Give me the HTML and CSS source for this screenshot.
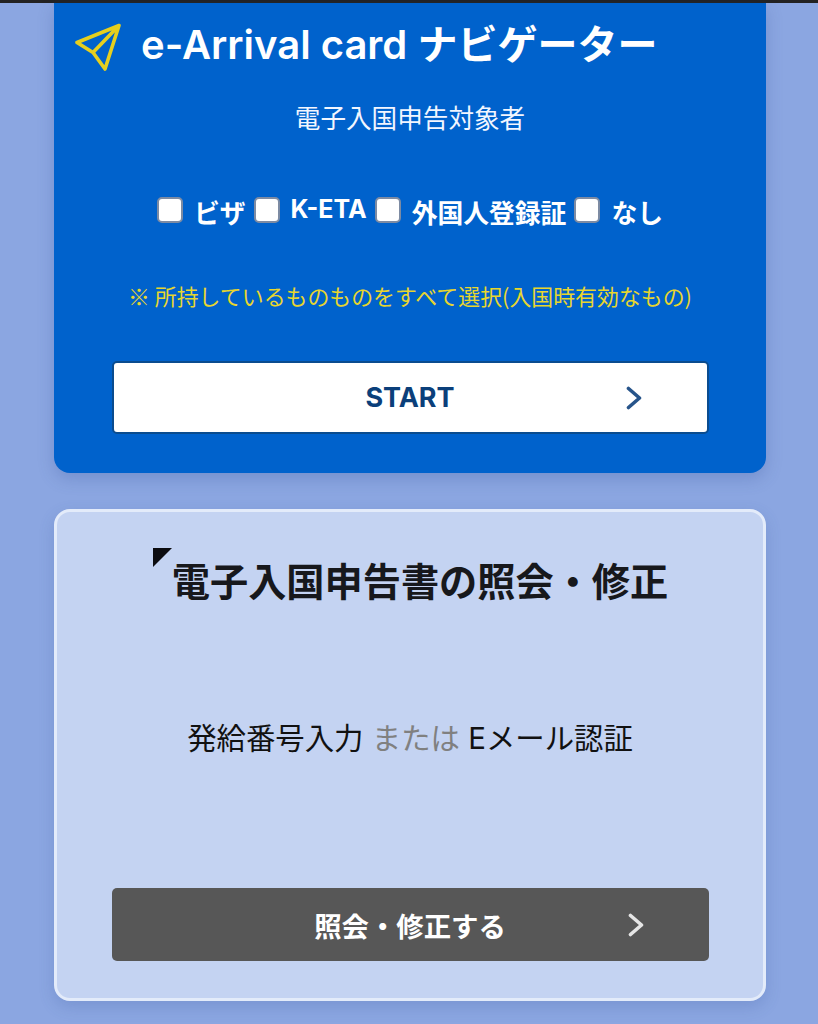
FILE: index.html
```html
<!DOCTYPE html>
<html lang="ja">
<head>
<meta charset="utf-8">
<title>e-Arrival card</title>
<link rel="stylesheet" href="styles.css">
</head>
<body>
<div class="statusline"></div>
<main class="page">
  <section class="card card-blue">
    <h2 class="nav-title">
      <svg class="plane" viewBox="0 0 48 48" width="48" height="48" aria-hidden="true">
        <path d="M45 2.5 3 19.5 19 29.5 31 46Z M45 2.5 19 29.5" fill="none" stroke="#e6cf1e" stroke-width="3.6" stroke-linejoin="round"/>
      </svg>
      <span>e-Arrival card ナビゲーター</span>
    </h2>
    <p class="target">電子入国申告対象者</p>
    <div class="checks">
      <label class="check"><span class="box"></span><span class="lbl">ビザ</span></label>
      <label class="check"><span class="box"></span><span class="lbl lbl-up">K-ETA</span></label>
      <label class="check"><span class="box"></span><span class="lbl">外国人登録証</span></label>
      <label class="check"><span class="box"></span><span class="lbl">なし</span></label>
    </div>
    <p class="note">※ 所持しているものものをすべて選択(入国時有効なもの)</p>
    <a class="btn btn-white"><span>START</span>
      <svg class="chev" viewBox="0 0 16 24" width="16" height="24" aria-hidden="true"><path d="M2.5 2.5 13.5 12 2.5 21.5" fill="none" stroke="#27548a" stroke-width="3.6" stroke-linecap="round" stroke-linejoin="round"/></svg>
    </a>
  </section>
  <section class="card card-light">
    <h2 class="query-title"><span class="corner"></span>電子入国申告書の照会・修正</h2>
    <p class="query-text">発給番号入力 <span class="or">または</span> Eメール認証</p>
    <a class="btn btn-dark"><span>照会・修正する</span>
      <svg class="chev" viewBox="0 0 16 24" width="16" height="24" aria-hidden="true"><path d="M2.5 2.5 13.5 12 2.5 21.5" fill="none" stroke="#e6e6e6" stroke-width="3.6" stroke-linecap="round" stroke-linejoin="round"/></svg>
    </a>
  </section>
</main>
</body>
</html>
```
FILE: styles.css
```css
* { box-sizing: border-box; }
html, body { margin: 0; padding: 0; }
body {
  width: 818px;
  height: 1024px;
  overflow: hidden;
  background: #8ba6e1;
  font-family: Inter, "Noto Sans CJK JP", sans-serif;
}
.statusline { height: 3px; background: #222; }
.page {
  padding: 0 52px 0 54px;
  display: flex;
  flex-direction: column;
  gap: 36px;
}
.card { width: 712px; position: relative; }
.card-blue {
  height: 470px;
  background: #0062cc;
  border-radius: 0 0 16px 16px;
  box-shadow: 0 6px 16px rgba(50, 80, 150, .25);
  padding-top: 14px;
  color: #fff;
  display: flex;
  flex-direction: column;
  align-items: center;
}
.nav-title {
  margin: 0;
  align-self: flex-start;
  display: flex;
  align-items: center;
  gap: 19px;
  padding-left: 20px;
  height: 56px;
  font-size: 40px;
  font-weight: 600;
  line-height: 56px;
  white-space: nowrap;
}
.plane { flex: none; margin-top: 4px; }
.target {
  margin: 28px 0 0;
  font-size: 25.6px;
  line-height: 36px;
  color: #f2f6ff;
}
.checks {
  margin-top: 57px;
  height: 40px;
  display: flex;
  align-items: center;
  gap: 8px;
  font-size: 25.8px;
  font-weight: 700;
}
.check { display: flex; align-items: center; gap: 11px; }
.box {
  width: 26px;
  height: 26px;
  background: #fff;
  border: 2px solid #7d8ba3;
  border-radius: 5px;
  margin-top: -8px;
}
.lbl { line-height: 40px; }
.lbl-up { font-size: 25px; margin-top: -10px; }
.note {
  margin: 46px 0 0;
  font-family: "Noto Sans CJK JP", sans-serif;
  font-size: 21.9px;
  line-height: 32px;
  color: #e8d62e;
}
.btn {
  width: 597px;
  height: 73px;
  border-radius: 5px;
  display: flex;
  align-items: center;
  justify-content: center;
  position: relative;
  font-size: 27px;
  font-weight: 700;
}
.btn .chev { position: absolute; right: 65px; }
.btn-white {
  margin-top: 49px;
  background: #fff;
  border: 2px solid #0a4c8f;
  color: #0b3f7a;
}
.btn-white .chev { top: 23px; }
.card-light {
  height: 492px;
  background: #c4d3f2;
  border: 3px solid #e3ebfa;
  border-radius: 16px;
  box-shadow: 0 6px 16px rgba(50, 80, 150, .2);
  display: flex;
  flex-direction: column;
  align-items: center;
}
.query-title {
  margin: 43px 0 0 20px;
  position: relative;
  font-size: 38.2px;
  font-weight: 700;
  line-height: 54px;
  color: #17181c;
  white-space: nowrap;
}
.corner {
  position: absolute;
  left: -19px;
  top: -7px;
  width: 0;
  height: 0;
  border-top: 19px solid #0c0c10;
  border-right: 19px solid transparent;
}
.query-text {
  margin: 109px 0 0;
  font-size: 29.4px;
  line-height: 42px;
  color: #111;
}
.or { color: #808080; }
.btn-dark {
  margin-top: 128px;
  background: #575757;
  color: #fff;
  font-size: 27.4px;
}
.btn-dark .chev { top: 25px; }
```
